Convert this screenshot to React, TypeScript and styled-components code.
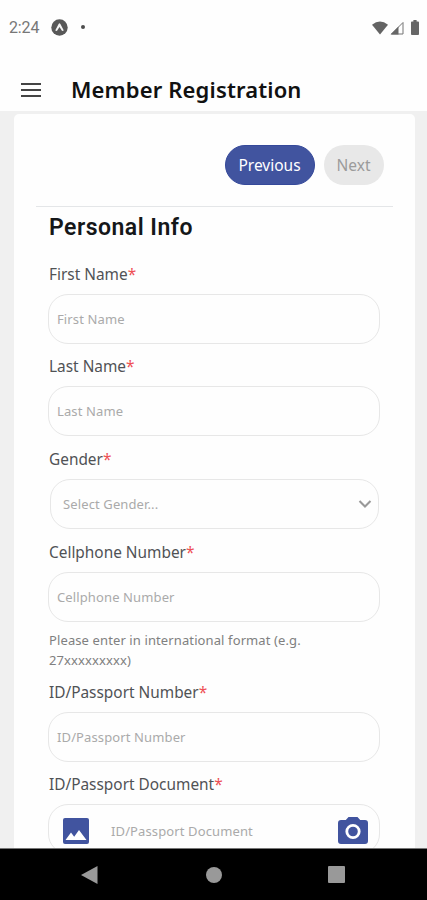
import React from "react";
import styled, { createGlobalStyle } from "styled-components";

const GlobalStyle = createGlobalStyle`
  * { box-sizing: border-box; }
  body { margin: 0; background: #fff; }
`;

const Screen = styled.div`
  width: 427px;
  height: 900px;
  overflow: hidden;
  display: flex;
  flex-direction: column;
  background: #fefefe;
  font-family: "Noto Sans", sans-serif;
`;

const StatusBar = styled.header`
  height: 55px;
  flex: none;
  display: flex;
  align-items: center;
  padding: 0 8px 0 9px;
`;

const Clock = styled.span`
  font: 400 16px/20px Roboto, sans-serif;
  color: #777;
  width: 42px;
  letter-spacing: -0.15px;
  margin-top: 1px;
`;

const Dot = styled.i`
  width: 4px;
  height: 4px;
  margin-left: 13px;
  margin-top: -1px;
  border-radius: 50%;
  background: #4d4d4d;
`;

const StatusIcons = styled.div`
  margin-left: auto;
  display: flex;
  align-items: center;
`;

const Spacer = styled.i`
  width: 7px;
`;

const AppBar = styled.div`
  height: 56px;
  flex: none;
  display: flex;
  align-items: center;
  padding: 13px 21px 0;
  gap: 30px;
`;

const Title = styled.h1`
  margin: -1px 0 0;
  font: 600 22px/30px "Noto Sans", sans-serif;
  color: #111;
  letter-spacing: 0.14px;
  white-space: nowrap;
`;

const Body = styled.main`
  flex: 1;
  min-height: 0;
  overflow: hidden;
  background: #f0f0f0;
  padding: 3px 12px 0 14px;
`;

const Card = styled.section`
  background: #fefefe;
  border-radius: 5px;
  height: 780px;
  padding: 31px 22px 0;
`;

const Actions = styled.div`
  height: 62px;
  display: flex;
  justify-content: flex-end;
  align-items: flex-start;
  gap: 9px;
  padding: 0 9px 0 0;
  border-bottom: 1px solid #e4e6e8;
`;

const PillButton = styled.button<{ $primary?: boolean }>`
  height: 40px;
  width: ${(p) => (p.$primary ? 90 : 60)}px;
  padding: 0 1px 1px 0;
  border: ${(p) => (p.$primary ? "1px solid #35499a" : "0")};
  border-radius: 20px;
  background: ${(p) => (p.$primary ? "#41549f" : "#e8e8e8")};
  color: ${(p) => (p.$primary ? "#fff" : "#9b9b9b")};
  font: 400 15.5px "Noto Sans", sans-serif;
  white-space: nowrap;
`;

const Form = styled.form`
  padding: 0 13px;
  display: flex;
  flex-direction: column;
`;

const SectionTitle = styled.h2`
  margin: 6px 0 18px;
  font: 600 23px/30px Roboto, sans-serif;
  letter-spacing: 0.48px;
  color: #151719;
  white-space: nowrap;
`;

const FieldBox = styled.div<{ $gap: number }>`
  display: flex;
  flex-direction: column;
  margin-bottom: ${(p) => p.$gap}px;
`;

const Label = styled.label`
  height: 24px;
  font-size: 15.4px;
  line-height: 27px;
  margin-bottom: 9px;
  color: #505255;
  white-space: nowrap;
`;

const Required = styled.span`
  color: #ee5055;
`;

const Control = styled.div<{ $inset?: boolean }>`
  height: 50px;
  margin: 0 ${(p) => (p.$inset ? 1 : 0)}px 0 ${(p) => (p.$inset ? 1 : -1)}px;
  padding: 0 ${(p) => (p.$inset ? 6 : 11)}px 0 ${(p) => (p.$inset ? 12 : 8)}px;
  border: 1px solid #e7e7e7;
  border-radius: 20px;
  display: flex;
  align-items: center;
  justify-content: space-between;
`;

const Placeholder = styled.span`
  font-size: 13px;
  line-height: 18px;
  letter-spacing: 0.12px;
  color: #aaa;
  white-space: nowrap;
`;

const DocPlaceholder = styled(Placeholder)`
  flex: 1;
  margin: 3px 0 0 20px;
`;

const DocIcon = styled.span`
  display: flex;
  margin: 4px 2px 0 6px;
`;

const CameraSlot = styled.span`
  display: flex;
  margin-top: 3px;
`;

const Hint = styled.p`
  margin: 9px 0 0;
  font-size: 13px;
  line-height: 19.5px;
  letter-spacing: 0.11px;
  color: #808080;
  white-space: nowrap;
`;

const NavBar = styled.nav`
  height: 52px;
  flex: none;
  background: #000;
  border-top: 1px solid #777;
  display: flex;
  align-items: center;
  justify-content: space-between;
  padding: 0 82px 0 81px;
`;

const ExpoIcon = () => (
  <svg width="17" height="17" viewBox="0 0 17 17">
    <circle cx="8.5" cy="8.5" r="8.2" fill="#585858" />
    <path d="M4.2 11.5 7.6 5q.9-1.4 1.8 0l3.4 6.5-1.7.6-2.6-4-2.6 4z" fill="#f5f5f5" />
  </svg>
);

const WifiIcon = () => (
  <svg width="18" height="14" viewBox="0 0 18 14">
    <path d="M0 3.8Q8-2.8 16 3.8L8 13.5z" fill="#646464" />
  </svg>
);

const SignalIcon = () => (
  <svg width="14" height="14" viewBox="0 0 14 14">
    <path d="M13 1.500V13H1.500z" fill="none" stroke="#747474" strokeWidth="1" />
    <path d="M8.500 5.500V13.500H.5z" fill="#666" />
  </svg>
);

const BatteryIcon = () => (
  <svg width="8" height="15" viewBox="0 0 9 15" preserveAspectRatio="none">
    <path d="M2.700 0h3.600v1.500H8q1 0 1 1V14q0 1-1 1H1q-1 0-1-1V2.500q0-1 1-1h1.700z" fill="#666" />
  </svg>
);

const MenuIcon = () => (
  <svg width="20" height="14" viewBox="0 0 20 14">
    <path d="M0 1h20M0 7h20M0 13h20" stroke="#444" strokeWidth="1.8" />
  </svg>
);

const ChevronIcon = () => (
  <svg width="14" height="10" viewBox="0 0 14 10">
    <path d="m1.500 2 5.500 5.500L12.500 2" fill="none" stroke="#999" strokeWidth="2.1" />
  </svg>
);

const ImageIcon = () => (
  <svg width="26" height="26" viewBox="0 0 26 26">
    <rect width="26" height="26" rx="2" fill="#41549f" />
    <path d="M2.500 22 8 14.500l3.200 4.200 4.800-6.700L23.500 22z" fill="#fff" />
  </svg>
);

const CameraIcon = () => (
  <svg width="30" height="27" viewBox="0 0 30 27">
    <path
      d="M10.500 0h9l2.700 3H27q3 0 3 3v18q0 3-3 3H3q-3 0-3-3V6q0-3 3-3h4.800z"
      fill="#41549f"
    />
    <circle cx="15" cy="14.500" r="6.200" fill="#41549f" stroke="#fff" strokeWidth="2.800" />
  </svg>
);

type FieldProps = {
  label: string;
  gap: number;
  inset?: boolean;
  children: React.ReactNode;
  hint?: React.ReactNode;
};

const Field = ({ label, gap, inset, children, hint }: FieldProps) => (
  <FieldBox $gap={gap}>
    <Label>
      {label}
      <Required>*</Required>
    </Label>
    <Control $inset={inset}>{children}</Control>
    {hint && <Hint>{hint}</Hint>}
  </FieldBox>
);

export default function App() {
  return (
    <>
      <GlobalStyle />
      <Screen>
        <StatusBar>
          <Clock>2:24</Clock>
          <ExpoIcon />
          <Dot />
          <StatusIcons>
            <WifiIcon />
            <SignalIcon />
            <Spacer />
            <BatteryIcon />
          </StatusIcons>
        </StatusBar>
        <AppBar>
          <MenuIcon />
          <Title>Member Registration</Title>
        </AppBar>
        <Body>
          <Card>
            <Actions>
              <PillButton $primary>Previous</PillButton>
              <PillButton disabled>Next</PillButton>
            </Actions>
            <Form>
              <SectionTitle>Personal Info</SectionTitle>
              <Field label="First Name" gap={9}>
                <Placeholder>First Name</Placeholder>
              </Field>
              <Field label="Last Name" gap={10}>
                <Placeholder>Last Name</Placeholder>
              </Field>
              <Field label="Gender" gap={10} inset>
                <Placeholder>Select Gender...</Placeholder>
                <ChevronIcon />
              </Field>
              <Field
                label="Cellphone Number"
                gap={9}
                hint={
                  <>
                    Please enter in international format (e.g.
                    <br />
                    27xxxxxxxxx)
                  </>
                }
              >
                <Placeholder>Cellphone Number</Placeholder>
              </Field>
              <Field label="ID/Passport Number" gap={9}>
                <Placeholder>ID/Passport Number</Placeholder>
              </Field>
              <Field label="ID/Passport Document" gap={9}>
                <DocIcon>
                  <ImageIcon />
                </DocIcon>
                <DocPlaceholder>ID/Passport Document</DocPlaceholder>
                <CameraSlot>
                  <CameraIcon />
                </CameraSlot>
              </Field>
            </Form>
          </Card>
        </Body>
        <NavBar>
          <svg width="17" height="18" viewBox="0 0 17 18">
            <path d="M0 9 16.500 0v18z" fill="#999" />
          </svg>
          <svg width="18" height="16" viewBox="0 0 18 16">
            <circle cx="10" cy="8" r="8" fill="#999" />
          </svg>
          <svg width="17" height="17" viewBox="0 0 17 17">
            <rect width="17" height="17" rx="1" fill="#999" />
          </svg>
        </NavBar>
      </Screen>
    </>
  );
}
